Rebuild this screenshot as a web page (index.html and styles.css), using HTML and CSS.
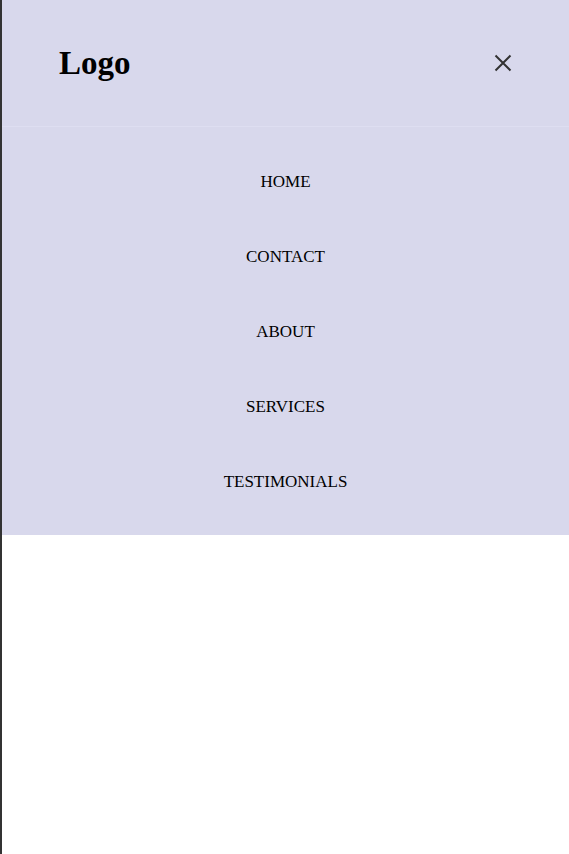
FILE: index.html
```html
<!DOCTYPE html>
<html lang="en">
<head>
<meta charset="utf-8">
<title>Menu</title>
<link rel="stylesheet" href="styles.css">
</head>
<body>
<div class="page">
  <div class="panel">
    <header class="header">
      <h1 class="logo">Logo</h1>
      <button class="close" aria-label="Close menu">
        <svg width="24" height="24" viewBox="0 0 24 24" aria-hidden="true">
          <path d="M4.5 4.5 L19.5 19.5 M19.5 4.5 L4.5 19.5" stroke="#333" stroke-width="2" fill="none"/>
        </svg>
      </button>
    </header>
    <nav class="nav">
      <ul class="menu">
        <li class="item"><a href="#">HOME</a></li>
        <li class="item"><a href="#">CONTACT</a></li>
        <li class="item"><a href="#">ABOUT</a></li>
        <li class="item"><a href="#">SERVICES</a></li>
        <li class="item"><a href="#">TESTIMONIALS</a></li>
      </ul>
    </nav>
  </div>
</div>
</body>
</html>
```
FILE: styles.css
```css
html, body {
  margin: 0;
  padding: 0;
  background: #ffffff;
}
body {
  font-family: "Liberation Serif", "Times New Roman", serif;
  color: #000;
}
.page {
  min-height: 100vh;
  border-left: 2px solid #333333;
  box-sizing: border-box;
}
.panel {
  background: #d8d8ec;
}
.header {
  height: 127px;
  box-sizing: border-box;
  display: flex;
  align-items: center;
  justify-content: space-between;
  padding: 0 54px 0 56px;
  border-bottom: 1px solid #dedef1;
}
.logo {
  margin: 0;
  font-size: 33px;
  font-weight: bold;
  line-height: 1;
  padding-left: 1px;
}
.close {
  background: none;
  border: 0;
  padding: 0;
  width: 24px;
  height: 24px;
  display: flex;
  align-items: center;
  justify-content: center;
  margin-top: 0;
}
.nav {
  padding: 17px 0 16px;
}
.menu {
  list-style: none;
  margin: 0;
  padding: 0;
}
.item {
  text-align: center;
  padding: 28px 0;
  line-height: 19px;
  font-size: 17px;
}
.item a {
  color: #000;
  text-decoration: none;
}
```
